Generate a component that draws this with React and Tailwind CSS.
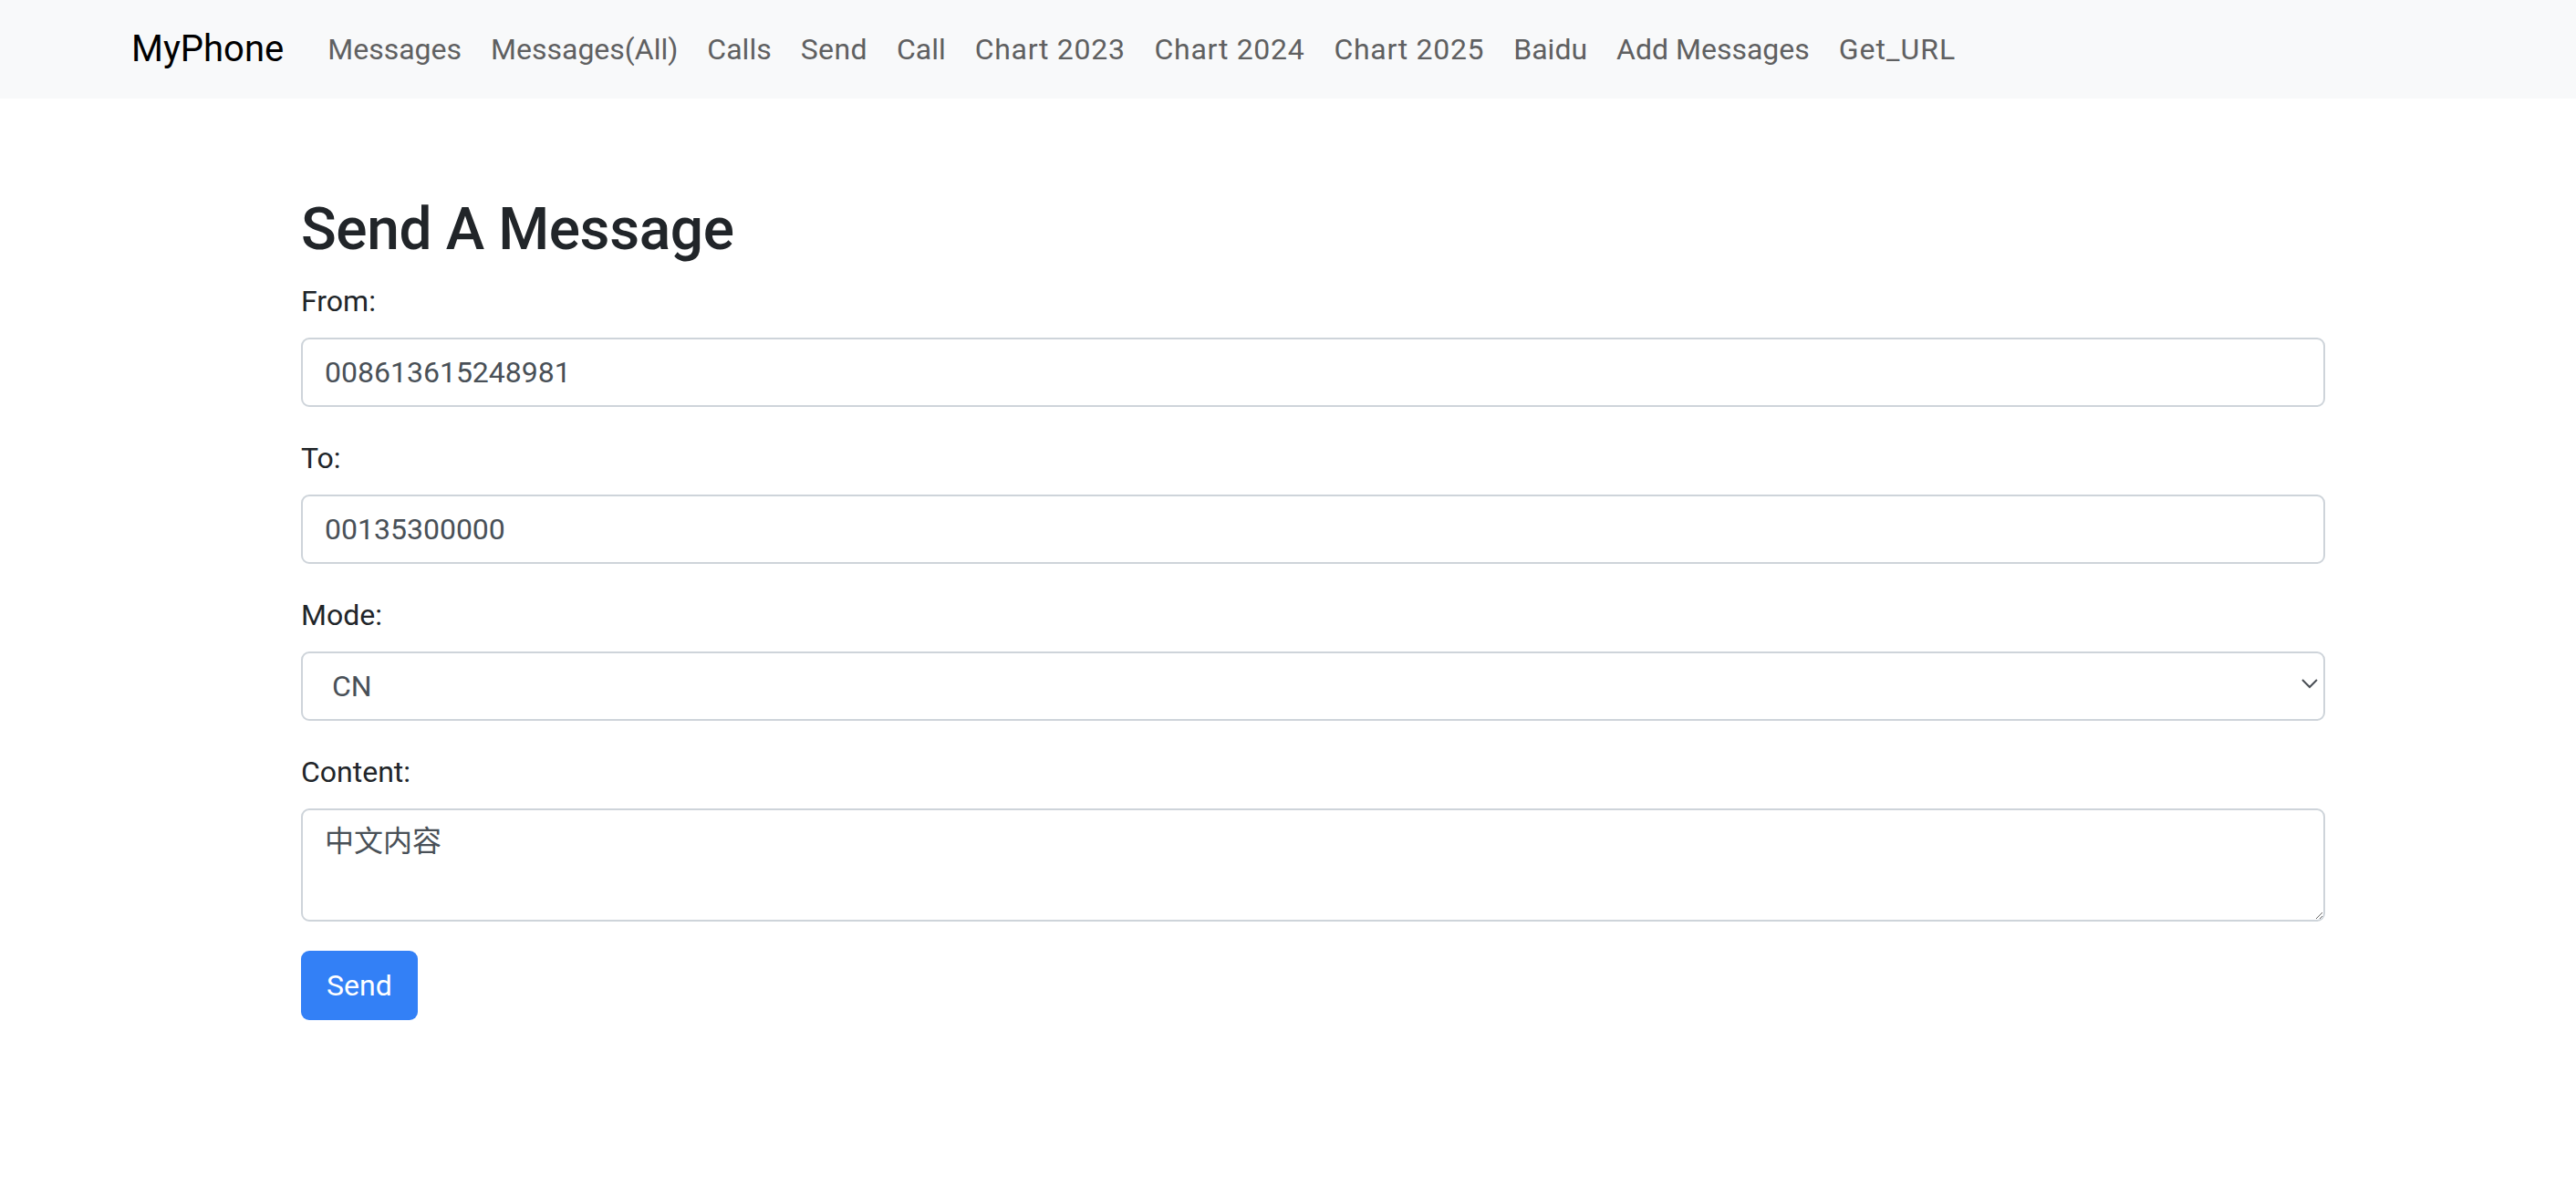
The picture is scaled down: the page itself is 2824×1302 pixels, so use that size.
import React from "react";

const links = [
  { t: "Messages", c: "" },
  { t: "Messages(All)", c: "" },
  { t: "Calls", c: "" },
  { t: "Send", c: "tracking-[0.4px]" },
  { t: "Call", c: "" },
  { t: "Chart 2023", c: "tracking-[0.7px]" },
  { t: "Chart 2024", c: "tracking-[0.7px]" },
  { t: "Chart 2025", c: "tracking-[0.7px]" },
  { t: "Baidu", c: "" },
  { t: "Add Messages", c: "" },
  { t: "Get_URL", c: "tracking-[1px]" },
];

function Label({ children }) {
  return (
    <label className="block mb-[16px] text-[32px] leading-[48px] text-[#212529]">
      {children}
    </label>
  );
}

export default function App() {
  return (
    <div className="min-h-screen bg-white font-['Roboto','Noto_Sans_CJK_SC',sans-serif]">
      <nav className="h-[108px] bg-[#f8f9fa] flex items-center pl-[144px]">
        <a className="text-[40px] leading-[60px] text-black mr-[32px]">MyPhone</a>
        <ul className="flex items-center">
          {links.map((l) => (
            <li key={l.t}>
              <a className={`block px-[16px] text-[32px] leading-[48px] text-[#5f6061] ${l.c}`}>
                {l.t}
              </a>
            </li>
          ))}
        </ul>
      </nav>

      <main className="pl-[330px] pt-[105px]">
        <h2 className="text-[64px] leading-[77px] font-medium tracking-[-0.4px] text-[#212529] mb-[16px]">
          Send A Message
        </h2>
        <form className="w-[2219px]" onSubmit={(e) => e.preventDefault()}>
          <div className="mb-[32px]">
            <Label>From:</Label>
            <input
              readOnly
              value="008613615248981"
              className="block w-full h-[76px] border-2 border-[#ced4da] rounded-[9px] px-[24px] text-[32px] text-[#495057] outline-none bg-white"
            />
          </div>
          <div className="mb-[32px]">
            <Label>To:</Label>
            <input
              readOnly
              value="00135300000"
              className="block w-full h-[76px] border-2 border-[#ced4da] rounded-[9px] px-[24px] text-[32px] text-[#495057] outline-none bg-white"
            />
          </div>
          <div className="mb-[32px]">
            <Label>Mode:</Label>
            <div className="relative">
              <select
                defaultValue="CN"
                className="block w-full h-[76px] appearance-none border-2 border-[#ced4da] rounded-[9px] pl-[32px] pr-[48px] text-[32px] text-[#495057] outline-none bg-white"
              >
                <option value="CN">CN</option>
                <option value="EN">EN</option>
              </select>
              <svg
                className="absolute right-[8px] top-[29px] pointer-events-none"
                width="18"
                height="12"
                viewBox="0 0 18 12"
                fill="none"
              >
                <path d="M1 2 L9 10 L17 2" stroke="#4a4f55" strokeWidth="2" />
              </svg>
            </div>
          </div>
          <div className="mb-[32px]">
            <Label>Content:</Label>
            <textarea
              readOnly
              rows={2}
              value="中文内容"
              className="block w-full h-[124px] border-2 border-[#ced4da] rounded-[9px] px-[24px] py-[10px] text-[32px] leading-[48px] text-[#495057] outline-none bg-white"
            />
          </div>
          <button
            type="submit"
            className="h-[76px] px-[28px] rounded-[9px] bg-[#3380f6] text-white text-[32px] leading-[48px]"
          >
            Send
          </button>
        </form>
      </main>
    </div>
  );
}
